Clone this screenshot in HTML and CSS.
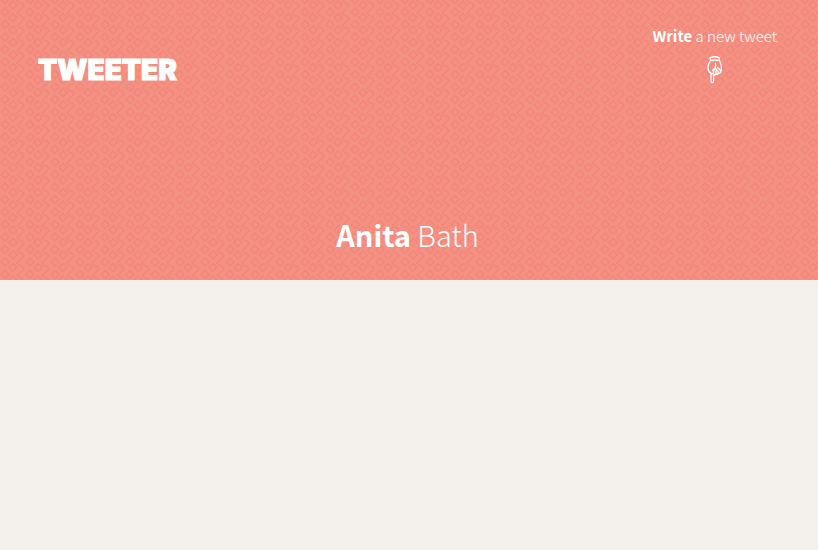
FILE: index.html
```html
<!DOCTYPE html>
<html lang="en">
<head>
<meta charset="utf-8">
<meta name="viewport" content="width=device-width, initial-scale=1">
<title>Tweeter</title>
<link rel="stylesheet" href="styles.css">
</head>
<body>
<header class="banner">
  <svg class="texture" aria-hidden="true">
    <defs>
      <pattern id="weave" width="25" height="25" patternUnits="userSpaceOnUse">
        <rect width="25" height="25" fill="#f98d81"/>
        <g fill="none" stroke="#fd7e76" stroke-width="1.500">
          <path d="M5 -4.500l4 4-4 4-4-4zM5 8l4 4-4 4-4-4zM5 20.500l4 4-4 4-4-4z"/>
          <path d="M13 1l4 4-4 4-4-4zM13 13.500l4 4-4 4-4-4z"/>
          <path d="M21 -4l-4 4 3 3h2l2 3-3 3-4 4 3 3h2l2 3-3 3-4 4"/>
        </g>
      </pattern>
      <pattern id="grain" width="2" height="2" patternUnits="userSpaceOnUse">
        <path d="M0 0h1v1H0zM1 1h1v1H1z" fill="#ee9888" fill-opacity=".4"/>
      </pattern>
    </defs>
    <rect width="100%" height="100%" fill="url(#weave)"/>
    <rect width="100%" height="100%" fill="url(#grain)"/>
  </svg>
  <nav class="nav">
    <a class="logo" href="#">TWEETER</a>
    <button class="compose" type="button">
      <span><strong>Write</strong> a new tweet</span>
      <svg class="hand" viewBox="0 0 16 28" aria-hidden="true">
        <path d="M3 1.500q5-1.500 9 0l.5 3q-5-1-9 0zM3.500 4.500Q1 8 1 11.500q0 4 3 6v7.500q0 1.800 1.300 1.800t1.300-1.800v-8M12.500 4.500q2 4 2 8 0 3-1 4M8.500 7.500v4l-3 3M8 12l-1.500 3.500v2.500q1.300 1.500 2.500 0v-3M8.500 12.500l2.500 3v2.500q-1 1-2 0M10.500 11.500l3 3v2q-1.300 1.500-2.500 0M4 17q1.200 1.200 2.500 0"/>
      </svg>
    </button>
  </nav>
  <h1 class="name"><strong>Anita</strong> Bath</h1>
</header>
</body>
</html>
```
FILE: styles.css
```css
* { box-sizing: border-box; }

body {
  margin: 0;
  background: #f4f1ec;
  color: #fff;
  font-family: "Noto Sans CJK JP", "Noto Sans", sans-serif;
  font-weight: 300;
}

strong { font-weight: 700; }

.banner {
  position: relative;
  display: flex;
  flex-direction: column;
  justify-content: space-between;
  min-height: 280px;
  padding: 24px 41px 26px 38px;
}

.texture {
  position: absolute;
  inset: 0;
  width: 100%;
  height: 100%;
}

.nav {
  position: relative;
  display: flex;
  justify-content: space-between;
  align-items: flex-end;
}

.logo {
  color: inherit;
  font: 900 28px/28px Inter, sans-serif;
  text-decoration: none;
  -webkit-text-stroke: 1px currentColor;
}

.compose {
  display: flex;
  flex-direction: column;
  align-items: center;
  gap: 8px;
  padding: 0;
  border: 0;
  background: none;
  color: inherit;
  font: inherit;
  font-size: 15px;
  line-height: 24px;
}

.hand {
  width: 16px;
  height: 28px;
  fill: none;
  stroke: currentColor;
  stroke-width: 1.3;
  stroke-linecap: round;
  stroke-linejoin: round;
}

.name {
  position: relative;
  margin: 0;
  font-size: 29px;
  font-weight: 300;
  line-height: 40px;
  text-align: center;
}
```
